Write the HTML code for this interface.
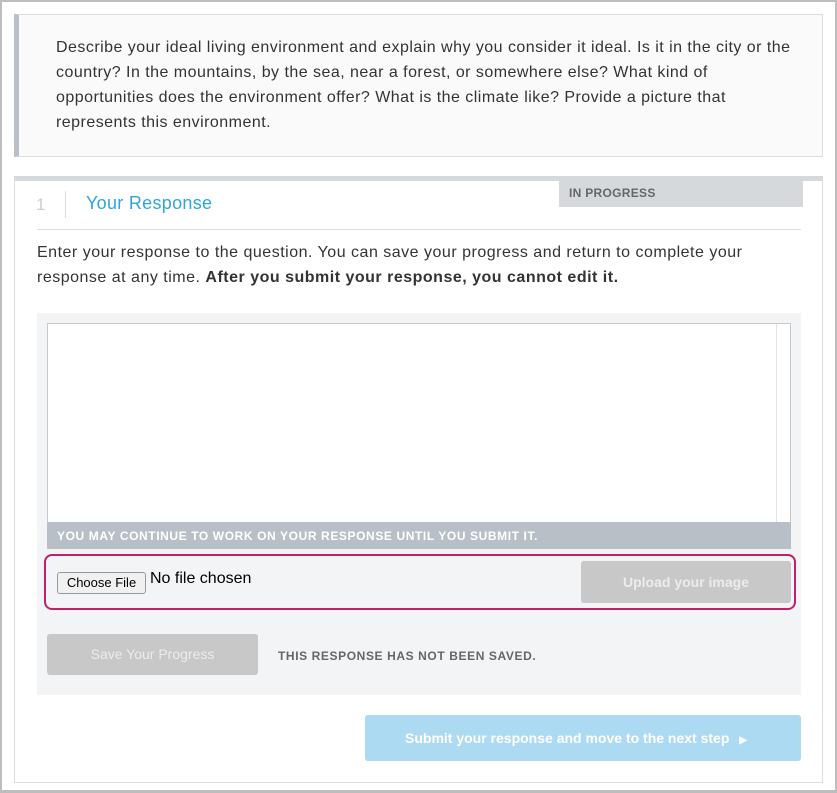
<!DOCTYPE html>
<html><head><style>
*{box-sizing:border-box;margin:0;padding:0}
body{width:837px;height:793px;background:#fff;font-family:"Liberation Sans",sans-serif;position:relative;overflow:hidden;color:#333}
.frame{position:absolute;left:0;top:0;width:837px;height:793px;border:2px solid #bdbdbd;border-bottom-width:3px}
.abs{position:absolute}
.prompt{left:14px;top:14px;width:809px;height:143px;background:#fafafa;border:1px solid #ddd;border-left:5px solid #b8bfc6}
.prompt p{position:absolute;left:37px;top:20px;white-space:nowrap;font-size:16px;letter-spacing:.47px;line-height:25px;color:#333}
.sec{left:14px;top:176px;width:809px;height:607px;border:1px solid #ddd;border-top:5px solid #d6d9dc}
.tag{left:559px;top:181px;width:244px;height:26px;background:#d6d9dc;font-size:12px;font-weight:bold;color:#666;padding:5px 10px;letter-spacing:.3px}
</style></head><body>
<div class="frame"></div>
<div class="abs prompt"><p>Describe your ideal living environment and explain why you consider it ideal. Is it in the city or the<br>country? In the mountains, by the sea, near a forest, or somewhere else? What kind of<br>opportunities does the environment offer? What is the climate like? Provide a picture that<br>represents this environment.</p></div>
<div class="abs sec"></div>
<div class="abs tag">IN PROGRESS</div>
<div class="abs" style="left:36px;top:195px;font-size:17px;color:#ccc">1</div>
<div class="abs" style="left:65px;top:191px;width:1px;height:27px;background:#ddd"></div>
<div class="abs" style="left:86px;top:193px;font-size:18px;letter-spacing:.3px;color:#2fa6d9">Your Response</div>
<div class="abs" style="left:37px;top:229px;width:764px;height:1px;background:#ddd"></div>
<div class="abs" style="left:37px;top:240px;white-space:nowrap;font-size:16px;letter-spacing:.5px;line-height:25px;color:#333">Enter your response to the question. You can save your progress and return to complete your<br>response at any time. <b>After you submit your response, you cannot edit it.</b></div>
<div class="abs" style="left:37px;top:313px;width:764px;height:382px;background:#f3f4f6"></div>
<div class="abs" style="left:47px;top:323px;width:744px;height:200px;background:#fff;border:1px solid #c8c8c8"></div>
<div class="abs" style="left:776px;top:324px;width:14px;height:198px;border-left:1px solid #e4e4e4"></div>
<div class="abs" style="left:47px;top:522px;width:744px;height:27px;background:#b8bfc6;color:#fff;font-size:12px;font-weight:bold;padding:7px 10px;letter-spacing:.6px">YOU MAY CONTINUE TO WORK ON YOUR RESPONSE UNTIL YOU SUBMIT IT.</div>
<div class="abs" style="left:44px;top:554px;width:752px;height:56px;border:2px solid #c0206a;border-radius:8px"></div>
<div class="abs" style="left:57px;top:572px;width:89px;height:22px;background:#f0f0f0;border:1px solid #999;border-radius:3px;font-size:13px;text-align:center;line-height:20px;color:#000">Choose File</div>
<div class="abs" style="left:150px;top:570px;font-size:16px;color:#000">No file chosen</div>
<div class="abs" style="left:581px;top:561px;width:210px;height:42px;background:#c8c8c8;border-radius:3px;color:#ececec;font-size:14px;font-weight:bold;text-align:center;line-height:42px">Upload your image</div>
<div class="abs" style="left:47px;top:634px;width:211px;height:41px;background:#c8c8c8;border-radius:3px;color:#ececec;font-size:14px;text-align:center;line-height:41px">Save Your Progress</div>
<div class="abs" style="left:278px;top:649px;font-size:12px;font-weight:bold;color:#666;letter-spacing:.6px">THIS RESPONSE HAS NOT BEEN SAVED.</div>
<div class="abs" style="left:365px;top:715px;width:436px;height:46px;background:#acdaf2;border-radius:3px;color:#fff;font-size:14px;font-weight:bold;line-height:46px;padding-left:40px">Submit your response and move to the next step <span style="font-size:10px;margin-left:6px">&#9654;</span></div>
</body></html>
